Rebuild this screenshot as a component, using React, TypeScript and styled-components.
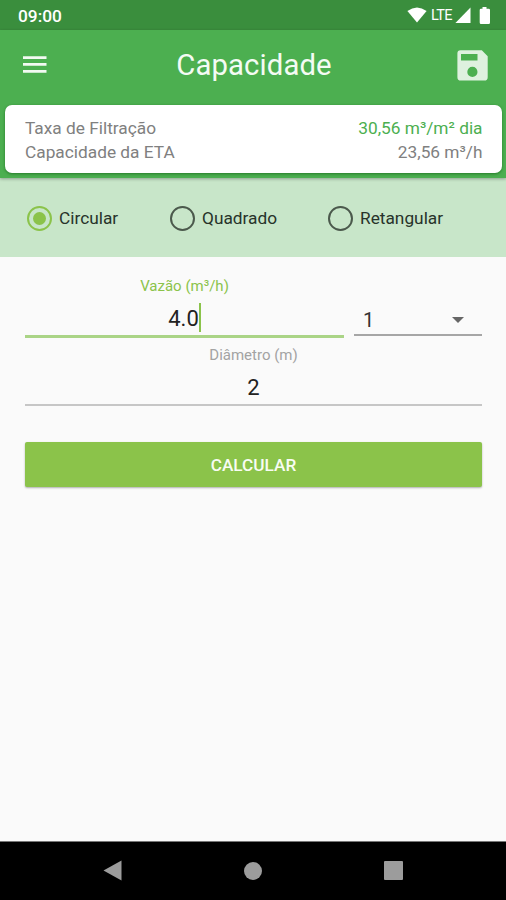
import React, { useState } from "react";
import styled, { createGlobalStyle } from "styled-components";

const GlobalStyle = createGlobalStyle`
  *, *::before, *::after { box-sizing: border-box; }
  body { margin: 0; background: #fafafa; font-family: Roboto, "Liberation Sans", sans-serif; }
`;

const Screen = styled.div`
  display: flex;
  flex-direction: column;
  height: 900px;
  background: #fafafa;
  overflow: hidden;
`;

const StatusBar = styled.div`
  display: flex;
  justify-content: space-between;
  flex: none;
  height: 30px;
  padding: 0 15px 0 18px;
  background: #3a8e3d;
  color: #fff;
`;

const Clock = styled.span`
  font-size: 17.3px;
  line-height: 32px;
  font-weight: 500;
`;

const StatusIcons = styled.div`
  display: flex;
  height: 30px;
  align-items: center;
`;

const Network = styled.span`
  width: 22px;
  margin: 2px 2px 0 4px;
  font-size: 14.5px;
  line-height: 28px;
  letter-spacing: -0.6px;
  white-space: nowrap;
`;

const Battery = styled.svg`
  margin-left: 8px;
`;

const Header = styled.header`
  flex: none;
  height: 148px;
  background: #4caf50;
  box-shadow: 0 1px 3px rgba(0, 0, 0, 0.3);
  z-index: 1;
`;

const Toolbar = styled.div`
  display: grid;
  grid-template-columns: 48px 1fr 48px;
  align-items: center;
  height: 75px;
  padding: 0 18px 5px 23px;
`;

const Title = styled.h1`
  margin: 0 3px 0 0;
  font-size: 29.3px;
  line-height: 40px;
  font-weight: 400;
  letter-spacing: 0.1px;
  color: #f4fbf4;
  text-align: center;
`;

const IconButton = styled.button<{ $end?: boolean }>`
  display: flex;
  justify-content: ${(p) => (p.$end ? "flex-end" : "flex-start")};
  padding: 0;
  border: 0;
  background: none;
`;

const Summary = styled.section`
  height: 68px;
  margin: 0 4px 0 5px;
  padding: 11px 19.5px 0 20px;
  border-radius: 7px;
  background: #fff;
  box-shadow: 0 1px 3px rgba(0, 70, 0, 0.5);
`;

const SummaryRow = styled.div<{ $highlight?: boolean }>`
  display: flex;
  justify-content: space-between;
  font-size: 17.3px;
  line-height: 24px;
  color: #808080;
  & > :last-child { color: ${(p) => (p.$highlight ? "#4caf50" : "#808080")}; }
`;

const ShapeBar = styled.div`
  display: flex;
  flex: none;
  align-items: center;
  height: 79px;
  padding: 1px 0 0 27px;
  background: #c8e6c9;
`;

const ShapeOption = styled.label<{ $width: number }>`
  display: flex;
  align-items: center;
  gap: 7px;
  width: ${(p) => p.$width}px;
  font-size: 17.3px;
  line-height: 24px;
  color: #27332a;
`;

const Radio = styled.input`
  appearance: none;
  display: grid;
  place-items: center;
  width: 25px;
  height: 25px;
  margin: 0;
  border: 2px solid #4b594c;
  border-radius: 50%;
  &:checked { border-color: #8bc34a; }
  &:checked::after {
    content: "";
    width: 13px;
    height: 13px;
    border-radius: 50%;
    background: #8bc34a;
  }
`;

const Form = styled.main`
  display: flex;
  flex: 1;
  flex-direction: column;
  padding: 17px 24px 0 25px;
`;

const FieldRow = styled.div`
  display: flex;
  align-items: flex-start;
  gap: 10px;
  height: 69px;
`;

const Field = styled.div<{ $active?: boolean }>`
  display: flex;
  flex: 1;
  flex-direction: column;
  align-items: center;
  height: ${(p) => (p.$active ? 64 : 63)}px;
  border-bottom: ${(p) => (p.$active ? "3px solid #aad486" : "2px solid #c6c6c6")};
`;

const FieldLabel = styled.span<{ $active?: boolean }>`
  font-size: 15px;
  line-height: 24px;
  color: ${(p) => (p.$active ? "#8bc34a" : "#a3a3a3")};
`;

const FieldValue = styled.div`
  display: flex;
  align-items: center;
  height: 42px;
  padding-top: 4px;
  font-size: 22px;
  color: #222;
`;

const Caret = styled.i`
  width: 2px;
  height: 29px;
  margin-top: -2px;
  background: #8bc34a;
`;

const Select = styled.div`
  display: flex;
  align-items: center;
  justify-content: space-between;
  width: 128px;
  height: 32px;
  margin-top: 30px;
  padding: 2px 18px 0 9px;
  border-bottom: 2px solid #a6a6a6;
  font-size: 20px;
  color: #333;
`;

const SubmitButton = styled.button`
  height: 45px;
  margin-top: 30px;
  padding: 1px 0 0;
  border: 0;
  border-radius: 2px;
  background: #8bc34a;
  box-shadow: 0 1px 2px rgba(0, 0, 0, 0.3);
  font: 500 17.2px/24px Roboto, sans-serif;
  color: #f8fcf3;
`;

const NavBar = styled.nav`
  display: grid;
  grid-template-columns: repeat(3, 140.5px);
  justify-content: center;
  align-items: center;
  justify-items: center;
  flex: none;
  height: 59px;
  padding-bottom: 1px;
  background: #000;
  border-top: 1px solid #777;
`;

const shapes = [
  { label: "Circular", width: 143 },
  { label: "Quadrado", width: 158 },
  { label: "Retangular", width: 130 },
];

export default function App() {
  const [shape, setShape] = useState("Circular");
  return (
    <Screen>
      <GlobalStyle />
      <StatusBar>
        <Clock>09:00</Clock>
        <StatusIcons>
          <svg width="20" height="16" viewBox="0 0 20 16" fill="#fff">
            <path d="M.4 4.1Q10-3.2 19.6 4.1L10 15.4Z" />
          </svg>
          <Network>LTE</Network>
          <svg width="16" height="16" viewBox="0 0 16 16" fill="#fff">
            <path d="M15.5.5V16H.4Z" />
          </svg>
          <Battery width="12" height="17" viewBox="0 0 12 17" fill="#fff">
            <path d="M3.5 0h4v1.7h2.2q1.3 0 1.3 1.3v12.5q0 1.5-1.3 1.5H2Q.7 17 .7 15.5V3q0-1.3 1.3-1.3h1.5Z" />
          </Battery>
        </StatusIcons>
      </StatusBar>
      <Header>
        <Toolbar>
          <IconButton aria-label="Menu">
            <svg width="24" height="18" viewBox="0 0 24 18" fill="#f2faf2">
              <path d="M0 .2h23.5v2.8H0zM0 7h23.5v2.8H0zM0 14h23.5v2.8H0z" />
            </svg>
          </IconButton>
          <Title>Capacidade</Title>
          <IconButton $end aria-label="Salvar">
            <svg width="31" height="31" viewBox="0 0 31 31" fill="#def1df" fillRule="evenodd">
              <path d="M3.5.3h21.3l5.9 6v20.9q0 3.4-3.4 3.4H3.8Q.4 30.6.4 27.2V3.5Q.4.3 3.5.3ZM4 4v6.4h16.5V4ZM15.4 16.8a5.1 5.1 0 1 0 0 10.2 5.1 5.1 0 0 0 0-10.2Z" />
            </svg>
          </IconButton>
        </Toolbar>
        <Summary>
          <SummaryRow $highlight>
            <span>Taxa de Filtração</span>
            <span>30,56 m³/m² dia</span>
          </SummaryRow>
          <SummaryRow>
            <span>Capacidade da ETA</span>
            <span>23,56 m³/h</span>
          </SummaryRow>
        </Summary>
      </Header>
      <ShapeBar>
        {shapes.map((s) => (
          <ShapeOption key={s.label} $width={s.width}>
            <Radio
              type="radio"
              name="shape"
              checked={shape === s.label}
              onChange={() => setShape(s.label)}
            />
            {s.label}
          </ShapeOption>
        ))}
      </ShapeBar>
      <Form>
        <FieldRow>
          <Field $active>
            <FieldLabel $active>Vazão (m³/h)</FieldLabel>
            <FieldValue>
              4.0
              <Caret />
            </FieldValue>
          </Field>
          <Select>
            <span>1</span>
            <svg width="12" height="6" viewBox="0 0 12 6" fill="#666">
              <path d="M0 0h12L6 6Z" />
            </svg>
          </Select>
        </FieldRow>
        <FieldRow>
          <Field>
            <FieldLabel>Diâmetro (m)</FieldLabel>
            <FieldValue>2</FieldValue>
          </Field>
        </FieldRow>
        <SubmitButton>CALCULAR</SubmitButton>
      </Form>
      <NavBar>
        <svg width="19" height="21" viewBox="0 0 19 21" fill="#9c9c9c">
          <path d="M18.5.5v20L.5 10.5Z" />
        </svg>
        <svg width="18" height="18" viewBox="0 0 18 18" fill="#9c9c9c">
          <circle cx="9" cy="9" r="9" />
        </svg>
        <svg width="19" height="19" viewBox="0 0 19 19" fill="#9c9c9c">
          <rect width="19" height="19" rx="1" />
        </svg>
      </NavBar>
    </Screen>
  );
}
